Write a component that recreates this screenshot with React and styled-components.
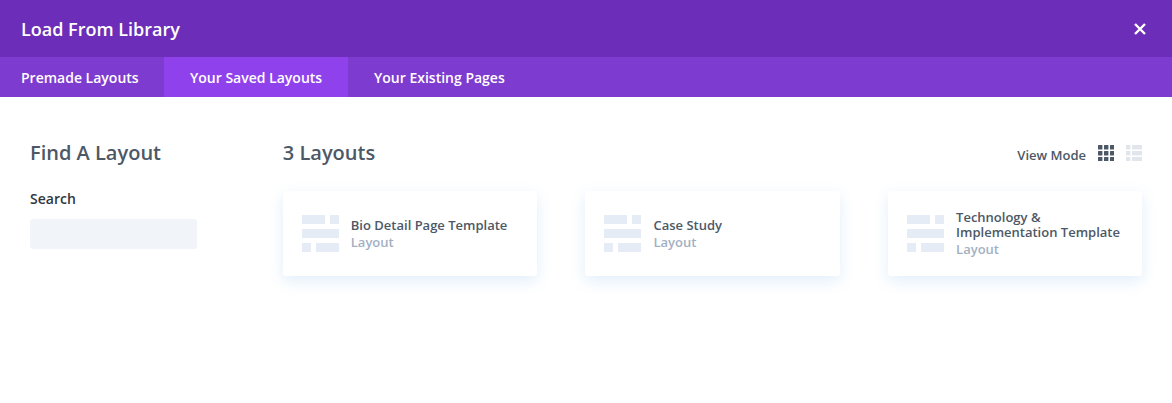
import React from 'react';
import styled, { createGlobalStyle } from 'styled-components';

const GlobalStyle = createGlobalStyle`
    html, body {
        margin: 0;
        padding: 0;
        background: #fff;
        font-family: "Open Sans", "Liberation Sans", sans-serif;
    }
`;

const Modal = styled.div`
    width: 1172px;
    height: 403px;
    overflow: hidden;
    background: #fff;
`;

const Header = styled.header`
    height: 57px;
    background: #6c2eb9;
    display: flex;
    align-items: center;
    justify-content: space-between;
    padding: 0 24px 0 21px;
`;

const Title = styled.h1`
    margin: 0;
    font-size: 18px;
    font-weight: 600;
    color: #fff;
`;

const CloseButton = styled.button`
    border: 0;
    padding: 0;
    background: none;
    width: 16px;
    height: 16px;
    display: flex;
    align-items: center;
    justify-content: center;
`;

const Tabs = styled.nav`
    height: 40px;
    background: #7e3bd0;
    display: flex;
`;

const Tab = styled.div`
    display: flex;
    align-items: center;
    width: ${props => props.$width}px;
    flex: none;
    padding-left: ${props => props.$first ? '21px' : '26px'};
    box-sizing: border-box;
    font-size: 14px;
    font-weight: 600;
    color: #fff;
    background: ${props => props.$active ? '#8f42ec' : 'transparent'};
`;

const Body = styled.div`
    display: flex;
    padding: 42px 29.6px 0 30px;
`;

const Sidebar = styled.aside`
    width: 252.8px;
    flex: none;
`;

const Heading = styled.h2`
    margin: 0;
    font-size: 20px;
    line-height: 28px;
    font-weight: 600;
    color: #4c5866;
`;

const SearchLabel = styled.label`
    display: block;
    margin-top: 22px;
    font-size: 14px;
    line-height: 20px;
    font-weight: 600;
    color: #32373c;
`;

const SearchInput = styled.div`
    margin-top: 10px;
    width: 167px;
    height: 30px;
    border-radius: 3px;
    background: #f1f5f9;
`;

const Main = styled.main`
    flex: 1;
    min-width: 0;
`;

const MainTop = styled.div`
    display: flex;
    align-items: center;
    justify-content: space-between;
`;

const ViewMode = styled.div`
    display: flex;
    align-items: center;
    margin-right: 0.4px;
`;

const ViewLabel = styled.span`
    padding-top: 4px;
    font-size: 13px;
    font-weight: 600;
    color: #4c5866;
`;

const ViewIcon = styled.svg`
    display: block;
    margin-left: 12px;
`;

const Cards = styled.div`
    display: grid;
    grid-template-columns: repeat(3, 1fr);
    gap: 48.3px;
    margin-top: 24px;
`;

const Card = styled.div`
    height: 85px;
    display: flex;
    align-items: center;
    gap: 12px;
    padding: 0 19px;
    border-radius: 3px;
    background: #fff;
    box-shadow: 0 5px 15px rgba(43, 135, 218, 0.14);
`;

const CardText = styled.div`
    min-width: 0;
    padding-top: 1px;
`;

const CardTitle = styled.div`
    font-size: 13px;
    line-height: 15px;
    font-weight: 600;
    color: #4c5866;
`;

const CardType = styled.div`
    margin-top: 1px;
    font-size: 13px;
    line-height: 17px;
    font-weight: 600;
    color: #a3b0c2;
`;

const LayoutGlyph = () => (
    <svg width="37" height="37" viewBox="0 0 37 37" style={{ flex: 'none' }}>
        <g fill="#e6ecf5">
            <rect x="0" y="0" width="23" height="9" />
            <rect x="28" y="0" width="9" height="9" />
            <rect x="0" y="14" width="37" height="9" />
            <rect x="0" y="28" width="9" height="9" />
            <rect x="14" y="28" width="23" height="9" />
        </g>
    </svg>
);

const GridGlyph = () => (
    <ViewIcon width="16" height="16" viewBox="0 0 16 16">
        <g fill="#4c5866">
            {[0, 6, 12].map(y => [0, 6, 12].map(x => (
                <rect key={`${x}-${y}`} x={x} y={y} width="4.4" height="4.4" rx="0.5" />
            )))}
        </g>
    </ViewIcon>
);

const ListGlyph = () => (
    <ViewIcon width="16" height="16" viewBox="0 0 16 16">
        <g fill="#e1e6ec">
            {[0, 6, 12].map(y => (
                <React.Fragment key={y}>
                    <rect x="0" y={y} width="4.4" height="4.4" />
                    <rect x="6" y={y} width="10" height="4.4" />
                </React.Fragment>
            ))}
        </g>
    </ViewIcon>
);

const layouts = [
    'Bio Detail Page Template',
    'Case Study',
    'Technology & Implementation Template',
];

export default function App() {
    return (
        <Modal>
            <GlobalStyle />
            <Header>
                <Title>Load From Library</Title>
                <CloseButton>
                    <svg width="14" height="14" viewBox="0 0 14 14">
                        <path d="M2 2 L12 12 M12 2 L2 12" stroke="#fff" strokeWidth="2.4" />
                    </svg>
                </CloseButton>
            </Header>
            <Tabs>
                <Tab $first $width={164}>Premade Layouts</Tab>
                <Tab $active $width={184}>Your Saved Layouts</Tab>
                <Tab $width={183}>Your Existing Pages</Tab>
            </Tabs>
            <Body>
                <Sidebar>
                    <Heading>Find A Layout</Heading>
                    <SearchLabel>Search</SearchLabel>
                    <SearchInput />
                </Sidebar>
                <Main>
                    <MainTop>
                        <Heading>3 Layouts</Heading>
                        <ViewMode>
                            <ViewLabel>View Mode</ViewLabel>
                            <GridGlyph />
                            <ListGlyph />
                        </ViewMode>
                    </MainTop>
                    <Cards>
                        {layouts.map(name => (
                            <Card key={name}>
                                <LayoutGlyph />
                                <CardText>
                                    <CardTitle>{name}</CardTitle>
                                    <CardType>Layout</CardType>
                                </CardText>
                            </Card>
                        ))}
                    </Cards>
                </Main>
            </Body>
        </Modal>
    );
}
